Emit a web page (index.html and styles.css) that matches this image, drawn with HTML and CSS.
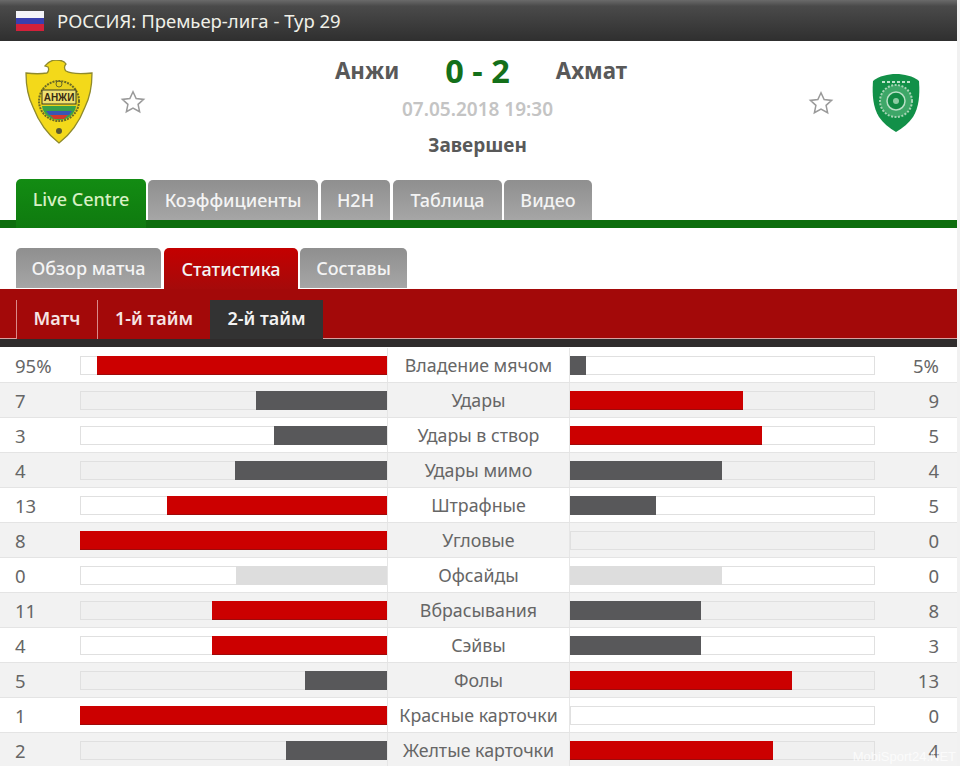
FILE: index.html
```html
<!DOCTYPE html>
<html lang="ru">
<head>
<meta charset="utf-8">
<title>Анжи - Ахмат</title>
<link rel="stylesheet" href="styles.css">
</head>
<body>
<div class="page">
  <header class="league">
    <svg class="flag" width="28" height="20" viewBox="0 0 28 20"><rect width="28" height="7" fill="#f4f4f8"/><rect y="7" width="28" height="6" fill="#3a3fae"/><rect y="13" width="28" height="7" fill="#d3213a"/></svg>
    <span>РОССИЯ: Премьер-лига - Тур 29</span>
  </header>

  <section class="match">
    <div class="side">
      <svg class="crest-home" width="68" height="84" viewBox="0 0 68 84">
        <path d="M1 13 C9 14 16 14 22 13 C24 11 24 9 23 7 L20 6 C23 2 27 0 31 0 C36 0 40 2 41 4 C39 6 39 9 41 11 C46 14 56 14 67 13 C67 26 65 37 60 47 C55 60 46 74 34 83 C22 74 13 60 8 47 C3 37 1 26 1 13 Z" fill="#f3d91a" stroke="#8f8a2c" stroke-width="1.3"/>
        <circle cx="34" cy="41" r="20" fill="#e9d21c" stroke="#6b6a26" stroke-width="2" stroke-dasharray="2 1"/>
        <circle cx="34" cy="24" r="3" fill="none" stroke="#6b6a26"/>
        <rect x="17" y="30" width="34" height="14" fill="#efe070" stroke="#3d3d20"/>
        <text x="34" y="41" class="crest-text" text-anchor="middle">АНЖИ</text>
        <path d="M17 46h34c-1 8-8 14-17 14s-16-6-17-14z" fill="#38a04a"/>
        <path d="M21 51h26l-3 4H24z" fill="#3a55b4"/>
        <path d="M25 55h18l-4 4h-10z" fill="#d33a2c"/>
        <circle cx="34" cy="71" r="3" fill="#5a5a30"/>
      </svg>
      <svg class="star" width="26" height="26" viewBox="0 0 24 24"><path d="M12 2.5l2.9 6.3 6.9.8-5.1 4.6 1.4 6.8-6.1-3.4-6.1 3.4 1.4-6.8-5.1-4.6 6.9-.8z" fill="#fff" stroke="#9a9a9a" stroke-width="1.4"/></svg>
    </div>
    <div class="summary">
      <div class="teams">
        <span class="team">Анжи</span>
        <span class="score">0 - 2</span>
        <span class="team">Ахмат</span>
      </div>
      <div class="date">07.05.2018 19:30</div>
      <div class="status">Завершен</div>
    </div>
    <div class="side side-away">
      <svg class="star" width="26" height="26" viewBox="0 0 24 24"><path d="M12 2.5l2.9 6.3 6.9.8-5.1 4.6 1.4 6.8-6.1-3.4-6.1 3.4 1.4-6.8-5.1-4.6 6.9-.8z" fill="#fff" stroke="#9a9a9a" stroke-width="1.4"/></svg>
      <svg class="crest-away" width="50" height="60" viewBox="0 0 50 60">
        <path d="M25 1c8 0 17 2 23 7 1 14 0 26-6 36-4 6-10 11-17 15C18 55 12 50 8 44 2 34 1 22 2 8 8 3 17 1 25 1z" fill="#129048"/>
        <circle cx="25" cy="28" r="16" fill="#3ea768" stroke="#a6d4b4" stroke-width="2" stroke-dasharray="2 1.5"/>
        <circle cx="25" cy="28" r="9" fill="#118a44" stroke="#b9dfc6" stroke-width="1.5"/>
        <circle cx="25" cy="28" r="3" fill="#8dcba3"/>
        <path d="M11 9h28" stroke="#bfe3cb" stroke-width="2" stroke-dasharray="3 2"/>
      </svg>
    </div>
  </section>

  <nav class="tabs tabs-main">
    <a class="tab tab-green tab-live">Live Centre</a>
    <a class="tab tab-odds">Коэффициенты</a>
    <a class="tab tab-h2h">H2H</a>
    <a class="tab tab-table">Таблица</a>
    <a class="tab tab-video">Видео</a>
  </nav>

  <nav class="tabs tabs-sub">
    <a class="tab tab-overview">Обзор матча</a>
    <a class="tab tab-active-red tab-stats">Статистика</a>
    <a class="tab tab-lineups">Составы</a>
  </nav>

  <nav class="periods">
    <a class="period period-match">Матч</a>
    <a class="period period-first">1-й тайм</a>
    <a class="period period-active">2-й тайм</a>
  </nav>

  <div class="stats">
    <div class="row"><span class="val">95%</span><div class="track track-l"><i class="bar red" style="width:94.5%"></i></div><span class="label">Владение мячом</span><div class="track"><i class="bar dark" style="width:5.2%"></i></div><span class="val val-r">5%</span></div>
    <div class="row"><span class="val">7</span><div class="track track-l"><i class="bar dark" style="width:42.7%"></i></div><span class="label">Удары</span><div class="track"><i class="bar red" style="width:56.7%"></i></div><span class="val val-r">9</span></div>
    <div class="row"><span class="val">3</span><div class="track track-l"><i class="bar dark" style="width:36.8%"></i></div><span class="label">Удары в створ</span><div class="track"><i class="bar red" style="width:63%"></i></div><span class="val val-r">5</span></div>
    <div class="row"><span class="val">4</span><div class="track track-l"><i class="bar dark" style="width:49.5%"></i></div><span class="label">Удары мимо</span><div class="track"><i class="bar dark" style="width:49.8%"></i></div><span class="val val-r">4</span></div>
    <div class="row"><span class="val">13</span><div class="track track-l"><i class="bar red" style="width:71.7%"></i></div><span class="label">Штрафные</span><div class="track"><i class="bar dark" style="width:28.2%"></i></div><span class="val val-r">5</span></div>
    <div class="row"><span class="val">8</span><div class="track track-l"><i class="bar red" style="width:100%"></i></div><span class="label">Угловые</span><div class="track"></div><span class="val val-r">0</span></div>
    <div class="row"><span class="val">0</span><div class="track track-l"><i class="bar light" style="width:49.2%"></i></div><span class="label">Офсайды</span><div class="track"><i class="bar light" style="width:49.8%"></i></div><span class="val val-r">0</span></div>
    <div class="row"><span class="val">11</span><div class="track track-l"><i class="bar red" style="width:57%"></i></div><span class="label">Вбрасывания</span><div class="track"><i class="bar dark" style="width:43%"></i></div><span class="val val-r">8</span></div>
    <div class="row"><span class="val">4</span><div class="track track-l"><i class="bar red" style="width:57%"></i></div><span class="label">Сэйвы</span><div class="track"><i class="bar dark" style="width:43%"></i></div><span class="val val-r">3</span></div>
    <div class="row"><span class="val">5</span><div class="track track-l"><i class="bar dark" style="width:26.7%"></i></div><span class="label">Фолы</span><div class="track"><i class="bar red" style="width:72.8%"></i></div><span class="val val-r">13</span></div>
    <div class="row"><span class="val">1</span><div class="track track-l"><i class="bar red" style="width:100%"></i></div><span class="label">Красные карточки</span><div class="track"></div><span class="val val-r">0</span></div>
    <div class="row"><span class="val">2</span><div class="track track-l"><i class="bar dark" style="width:32.9%"></i></div><span class="label">Желтые карточки</span><div class="track"><i class="bar red" style="width:66.6%"></i></div><span class="val val-r">4</span></div>
  </div>

  <div class="watermark">MobiSport24.NET</div>
</div>
</body>
</html>
```

FILE: styles.css
```css
* { box-sizing: border-box; }
html, body { margin: 0; padding: 0; background: #fff; }
body { font-family: "Noto Sans", "Open Sans", sans-serif; color: #666; }

.page {
  position: relative;
  width: 960px;
  height: 766px;
  overflow: hidden;
  background: #fff;
  border-right: 3px solid #f1f1f1;
}

/* League bar */
.league {
  height: 41px;
  display: flex;
  align-items: center;
  gap: 13px;
  padding: 0 0 0 16px;
  background: linear-gradient(#6a6a6a 0, #4a4a4a 15%, #2f2f2f 100%);
  color: #f0f0e8;
  font-size: 18.5px;
}

/* Match head */
.match {
  height: 138px;
  display: grid;
  grid-template-columns: 301px 360px 1fr;
  align-items: start;
}
.side {
  display: flex;
  align-items: center;
  padding: 19px 0 0 25px;
  gap: 27px;
}
.side-away {
  justify-content: flex-end;
  padding: 32px 36px 0 0;
  gap: 37px;
}
.crest-text { font: bold 10px "Liberation Sans", sans-serif; fill: #3a2c10; }
.summary { text-align: center; }
.teams {
  height: 36px;
  margin-top: 11px;
  display: flex;
  align-items: center;
  justify-content: center;
  gap: 46px;
}
.team { font-size: 22.3px; font-weight: 700; color: #595959; }
.score { font-size: 32.5px; font-weight: 700; color: #14701a; }
.date { margin-top: 8px; padding-right: 7px; font-size: 19px; font-weight: 600; color: #c4c4c4; line-height: 26px; }
.status { margin-top: 10px; padding-right: 7px; font-size: 19px; font-weight: 700; color: #595959; line-height: 26px; }

/* Tabs */
.tabs { display: flex; align-items: flex-end; padding-left: 16px; }
.tab {
  display: flex;
  align-items: center;
  justify-content: center;
  height: 40px;
  border-radius: 5px 5px 0 0;
  background: linear-gradient(#8f8f8f, #a6a6a6);
  color: #f4f4f4;
  font-size: 18px;
  font-weight: 500;
}
.tabs-main {
  height: 49px;
  border-bottom: 8px solid #0d6d0d;
}
.tab-green {
  height: 49px;
  margin-bottom: -8px;
  padding-bottom: 9px;
  background: linear-gradient(#138c13, #0f7a0f);
  color: #d8f0c4;
}
.tab-live { width: 130px; margin-right: 2px; }
.tab-odds { width: 170px; margin-right: 3px; }
.tab-h2h { width: 69px; margin-right: 3px; }
.tab-table { width: 109px; margin-right: 2px; }
.tab-video { width: 88px; }

.tabs-sub { margin-top: 20px; height: 41px; }
.tab-overview { width: 145px; margin-right: 3px; margin-bottom: 1px; }
.tab-active-red {
  height: 41px;
  background: linear-gradient(#c40000, #a50a0a);
  width: 134px;
  margin-right: 2px;
}
.tab-lineups { width: 107px; margin-bottom: 1px; }

/* Periods */
.periods {
  height: 58px;
  display: flex;
  align-items: flex-end;
  padding: 0 0 8px 16px;
  background: linear-gradient(#a30909 0, #a30909 49px, #d9a0a0 49px, #d9a0a0 50px, #2f2c2c 50px);
}
.period {
  height: 39px;
  display: flex;
  align-items: center;
  justify-content: center;
  padding-bottom: 3px;
  color: #f6e4e4;
  font-size: 18px;
  font-weight: 600;
  border-left: 1px solid #d98a8a;
  background: #a30909;
}
.period-match { width: 81px; }
.period-first { width: 113px; }
.period-active {
  width: 113px;
  background: #333;
  border-left: 0;
  color: #f2f2f2;
}

/* Stats */
.stats { margin-top: 1px; }
.row {
  display: grid;
  grid-template-columns: 80px 307px 183px 305px 1fr;
  align-items: center;
  height: 35px;
  background: #fff;
  border-bottom: 1px solid #e4e4e4;
}
.row:nth-child(even) { background: #f2f2f2; }
.val { padding-left: 15px; font-size: 18.5px; color: #666; }
.val-r { padding: 0 18px 0 0; text-align: right; }
.label {
  height: 100%;
  display: flex;
  align-items: center;
  justify-content: center;
  font-size: 17.8px;
  white-space: nowrap;
  color: #666;
  border-left: 1px solid #e6e6e6;
  border-right: 1px solid #e6e6e6;
}
.track {
  display: flex;
  height: 19px;
  background: #fff;
  box-shadow: inset 0 0 0 1px #e0e0e0;
}
.row:nth-child(even) .track { background: #f0f0f0; }
.track-l { justify-content: flex-end; }
.bar { display: block; height: 19px; }
.red { background: #cc0000; box-shadow: inset 0 -1px #9e0a0a; }
.dark { background: #58585a; }
.light { background: #dddddd; }

/* Watermark */
.watermark {
  position: absolute;
  right: 1px;
  bottom: 2px;
  color: rgba(255, 255, 255, 0.75);
  font-family: "Liberation Sans", sans-serif;
  font-size: 13px;
}
```
